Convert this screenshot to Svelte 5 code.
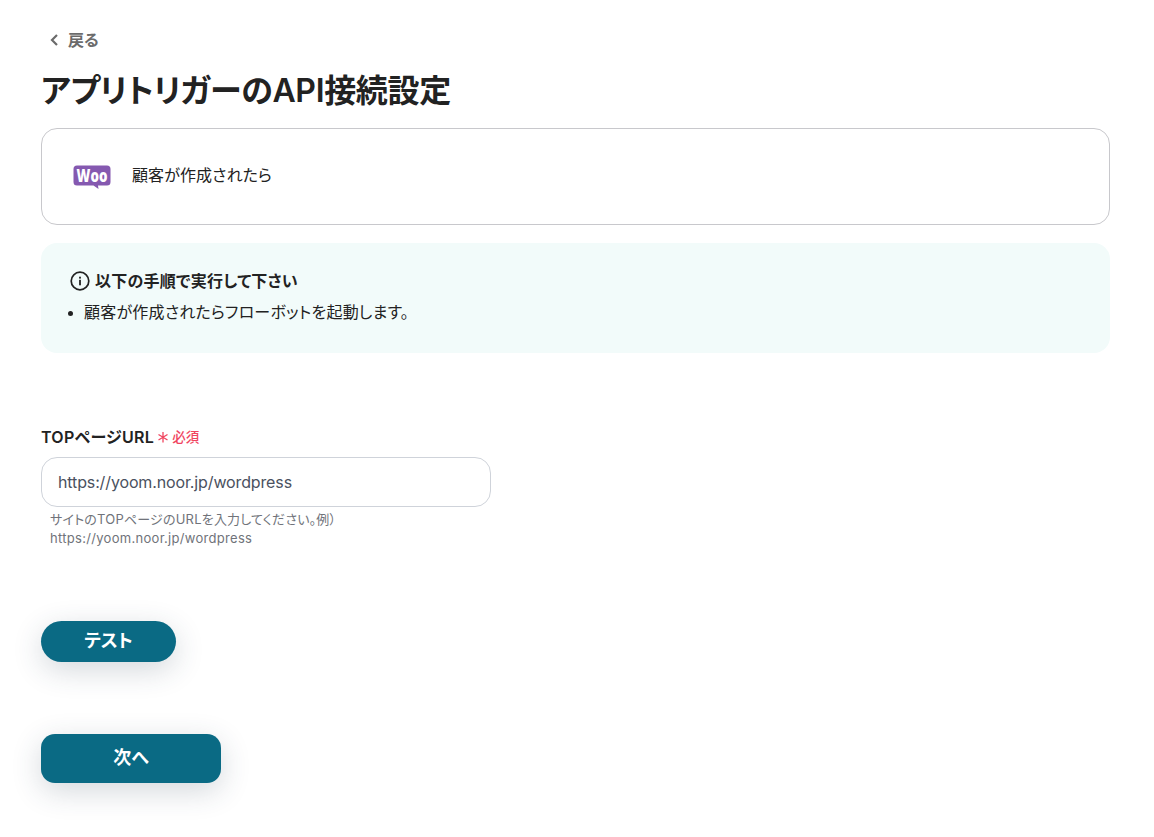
<script>
	let url = 'https://yoom.noor.jp/wordpress';
</script>

<div class="page">
	<a class="back" href="#back">
		<svg width="11" height="14" viewBox="0 0 11 14"><path d="M8 2 3 7l5 5" fill="none" stroke="#6b6b6b" stroke-width="2.200" /></svg>
		<span>戻る</span>
	</a>
	<h1>アプリトリガーのAPI接続設定</h1>

	<div class="card">
		<svg class="woo" width="38" height="24" viewBox="0 0 38 24">
			<path d="M4 .5h30a3.500 3.500 0 0 1 3.500 3.500v13A3.500 3.500 0 0 1 34 20.500H25l.5 3.500-5-3.500H4A3.500 3.500 0 0 1 .5 17V4A3.500 3.500 0 0 1 4 .5z" fill="#8559b0" />
			<text transform="translate(19 16.500) scale(.95 1.2)" text-anchor="middle" class="woo-text">Woo</text>
		</svg>
		<span class="card-text">顧客が作成されたら</span>
	</div>

	<div class="info">
		<div class="info-head">
			<svg width="20" height="20" viewBox="0 0 20 20">
				<circle cx="10" cy="10" r="8.800" fill="none" stroke="#222" stroke-width="1.700" />
				<rect x="9.100" y="8.800" width="1.800" height="5.500" fill="#222" />
				<rect x="9.100" y="5.700" width="1.800" height="1.900" fill="#222" />
			</svg>
			<span class="head-text">以下の手順で実行して下さい</span>
		</div>
		<ul>
			<li><span class="line">顧客が作成されたらフローボットを起動します。</span></li>
		</ul>
	</div>

	<div class="field">
		<div class="label">
			<span class="label-text">TOPページURL</span>
			<svg width="12" height="12" viewBox="0 0 12 12"><path d="M6 1v10.500M1.500 3.500l9 5.500M10.500 3.500l-9 5.500" stroke="#f0455f" stroke-width="1.300" fill="none" /></svg>
			<span class="req">必須</span>
		</div>
		<input type="text" value={url} />
		<p class="help"><span class="hint">サイトのTOPページのURLを入力してください。例）</span><br />{url}</p>
	</div>

	<button class="test"><span>テスト</span></button>
	<button class="next"><span>次へ</span></button>
</div>

<style>
	:global(body) {
		background: #fff;
		font-family: Inter, 'Noto Sans CJK JP', sans-serif;
		font-feature-settings: 'palt';
		color: #222;
	}
	.page {
		display: flex;
		flex-direction: column;
		align-items: flex-start;
		padding: 28px 44px 54px 41px;
	}
	.back {
		display: flex;
		align-items: center;
		gap: 8px;
		height: 24px;
		margin-left: 8px;
		color: #6b6b6b;
		font-size: 16px;
		line-height: 20px;
		font-weight: 600;
		text-decoration: none;
	}
	.back span {
		margin-top: -1px;
	}
	h1 {
		margin: 15px 0 0;
		font-size: 32px;
		line-height: 48px;
		font-weight: 600;
		letter-spacing: -0.33px;
		color: #222;
	}
	.card {
		box-sizing: border-box;
		display: flex;
		align-items: center;
		gap: 21px;
		width: 100%;
		height: 97px;
		margin-top: 13px;
		padding-left: 31px;
		border: 1px solid #c8c8cc;
		border-radius: 16px;
	}
	.card-text {
		margin-top: -5px;
		font-size: 16px;
		letter-spacing: 0.1px;
	}
	.woo-text {
		font-family: 'Open Sans', sans-serif;
		font-size: 14px;
		font-weight: 800;
		fill: #fff;
	}
	.info {
		box-sizing: border-box;
		width: 100%;
		height: 110px;
		margin-top: 18px;
		padding: 27px 29px;
		background: #f2fbfa;
		border-radius: 16px;
	}
	.info-head {
		display: flex;
		align-items: center;
		gap: 5px;
		height: 22px;
	}
	.head-text {
		margin-top: -2px;
		font-size: 16px;
		font-weight: 600;
		letter-spacing: 0.25px;
	}
	ul {
		margin: 10px 0 0;
		padding-left: 14px;
		font-size: 14px;
		line-height: 21px;
	}
	.line {
		font-size: 16px;
		letter-spacing: 0.22px;
	}
	.field {
		width: 450px;
		margin-top: 73px;
	}
	.label {
		display: flex;
		align-items: center;
		gap: 3px;
		height: 22px;
	}
	.label-text {
		margin-top: -2px;
		font-size: 16px;
		font-weight: 600;
		letter-spacing: 0.3px;
	}
	.req {
		margin-top: -2px;
		color: #f0455f;
		font-size: 13.500px;
		font-weight: 500;
	}
	input {
		display: block;
		box-sizing: border-box;
		width: 100%;
		height: 50px;
		margin-top: 9px;
		padding: 0 16px;
		border: 1px solid #cfd3da;
		border-radius: 16px;
		background: #fff;
		color: #4a5160;
		font: 400 16px Inter, sans-serif;
		letter-spacing: -0.13px;
	}
	.help {
		margin: 3px 0 0 9px;
		font-size: 13px;
		line-height: 19px;
		letter-spacing: 0.3px;
		color: #70737a;
	}
	.hint {
		letter-spacing: 0.2px;
	}
	button {
		border: 0;
		padding: 0 0 5px;
		background: #0a6a84;
		color: #fff;
		font-family: Inter, 'Noto Sans CJK JP', sans-serif;
		font-feature-settings: 'palt';
		font-size: 18px;
		font-weight: 600;
		box-shadow: 0 8px 30px rgba(40, 60, 80, 0.2);
	}
	.test {
		width: 135px;
		height: 41px;
		margin-top: 73px;
		border-radius: 21px;
	}
	.next {
		width: 180px;
		height: 49px;
		margin-top: 72px;
		border-radius: 14px;
	}
</style>
